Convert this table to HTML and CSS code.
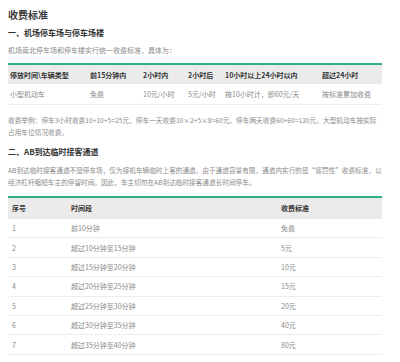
FILE: index.html
```html
<!DOCTYPE html>
<html lang="zh-CN">
<head>
<meta charset="utf-8">
<title>收费标准</title>
<link rel="stylesheet" href="styles.css">
</head>
<body>
<div class="page">
  <h1 class="title">收费标准</h1>
  <h2 class="section">一、机场停车场与停车场楼</h2>
  <p class="text p1">机场南北停车场和停车楼实行统一收费标准，具体为：</p>
  <table class="fee fee1">
    <thead>
      <tr>
        <th class="c1">停放时间\车辆类型</th>
        <th class="c2">前15分钟内</th>
        <th class="c3">2小时内</th>
        <th class="c4">2小时后</th>
        <th class="c5">10小时以上24小时以内</th>
        <th class="c6">超过24小时</th>
      </tr>
    </thead>
    <tbody>
      <tr>
        <td>小型机动车</td>
        <td>免费</td>
        <td>10元/小时</td>
        <td>5元/小时</td>
        <td>按10小时计，即60元/天</td>
        <td>按标准累加收费</td>
      </tr>
    </tbody>
  </table>
  <p class="text note">收费举例：停车3小时收费10+10+5=25元，停车一天收费10×2+5×8=60元。停车两天收费60+60=120元。大型机动车按实际占用车位情况收费。</p>
  <h2 class="section s2">二、AB到达临时接客通道</h2>
  <p class="text p2">AB到达临时接客通道不是停车场，仅为接机车辆临时上客的通道。由于通道容量有限，通道内实行的是“惩罚性”收费标准，以经济杠杆缩短车主的停留时间。因此，车主切勿在AB到达临时接客通道长时间停车。</p>
  <table class="fee fee2">
    <thead>
      <tr>
        <th class="d1">序号</th>
        <th class="d2">时间段</th>
        <th class="d3">收费标准</th>
      </tr>
    </thead>
    <tbody>
      <tr><td>1</td><td>前10分钟</td><td>免费</td></tr>
      <tr><td>2</td><td>超过10分钟至15分钟</td><td>5元</td></tr>
      <tr><td>3</td><td>超过15分钟至20分钟</td><td>10元</td></tr>
      <tr><td>4</td><td>超过20分钟至25分钟</td><td>15元</td></tr>
      <tr><td>5</td><td>超过25分钟至30分钟</td><td>20元</td></tr>
      <tr><td>6</td><td>超过30分钟至35分钟</td><td>40元</td></tr>
      <tr><td>7</td><td>超过35分钟至40分钟</td><td>80元</td></tr>
    </tbody>
  </table>
</div>
</body>
</html>
```
FILE: styles.css
```css
* { box-sizing: border-box; }
html, body {
  margin: 0;
  padding: 0;
  background: #ffffff;
}
body {
  font-family: "Noto Sans CJK SC", "Noto Sans", "Liberation Sans", sans-serif;
  color: #333;
}
.page {
  width: 374px;
  margin-left: 8px;
  padding-top: 8px;
}
.title {
  margin: 0;
  font-size: 10px;
  line-height: 14px;
  font-weight: 700;
  color: #3a3a3a;
}
.section {
  margin: 4px 0 0;
  font-size: 8px;
  line-height: 14px;
  font-weight: 700;
  color: #333;
}
.section.s2 {
  margin-top: 7px;
}
.text {
  margin: 0;
  font-size: 7px;
  line-height: 12px;
  color: #8a8a8a;
}
.p1 {
  margin-top: 4px;
}
.note {
  margin-top: 9px;
  font-size: 6.7px;
}
.p2 {
  margin-top: 5px;
  font-size: 6.65px;
}
.fee {
  width: 374px;
  border-collapse: collapse;
  border-top: 2px solid #2fae8a;
  table-layout: fixed;
  font-size: 7px;
}
.fee th {
  background: #ebebeb;
  color: #333;
  font-weight: 700;
  text-align: left;
  white-space: nowrap;
}
.fee td {
  color: #888;
  text-align: left;
  white-space: nowrap;
  border-bottom: 1px solid #ececec;
}
.fee1 {
  margin-top: 7px;
}
.fee1 th, .fee1 td {
  height: 20px;
  padding: 0 0 0 2px;
}
.fee1 .c1 { width: 80px; }
.fee1 .c2 { width: 53px; }
.fee1 .c3 { width: 45px; }
.fee1 .c4 { width: 37px; }
.fee1 .c5 { width: 97px; }
.fee1 .c6 { width: 62px; }
.fee2 {
  margin-top: 8px;
}
.fee2 th {
  height: 22px;
  padding: 0 0 0 4px;
}
.fee2 td {
  height: 19.4px;
  padding: 0 0 0 4px;
}
.fee2 .d1 { width: 59px; }
.fee2 .d2 { width: 210px; }
.fee2 .d3 { width: 105px; }
```
